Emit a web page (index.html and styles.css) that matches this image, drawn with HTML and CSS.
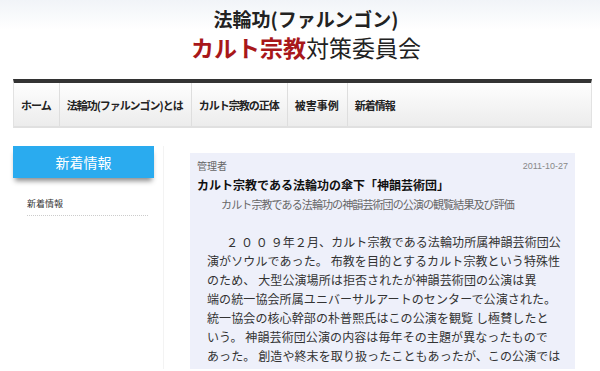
FILE: index.html
```html
<!DOCTYPE html>
<html lang="ja">
<head>
    <meta charset="UTF-8">
    <meta name="viewport" content="width=device-width, initial-scale=1.0">
    <title>カルト宗教対策委員会</title>
    <link rel="stylesheet" href="styles.css">
</head>
<body>
    <div class="header">
        <div class="site-sub">法輪功(ファルンゴン)</div>
        <div class="site-title"><span class="red">カルト宗教</span>対策委員会</div>
    </div>
    <div class="nav">
        <a href="#">ホーム</a>
        <a href="#">法輪功(ファルンゴン)とは</a>
        <a href="#">カルト宗教の正体</a>
        <a href="#">被害事例</a>
        <a href="#">新着情報</a>
    </div>
    <div class="content">
        <div class="sidebar">
            <div class="side-head">新着情報</div>
            <a class="side-link" href="#">新着情報</a>
        </div>
        <div class="main">
            <div class="post">
                <div class="meta">
                    <span class="author">管理者</span>
                    <span class="date">2011-10-27</span>
                </div>
                <div class="post-title">カルト宗教である法輪功の傘下「神韻芸術団」</div>
                <div class="post-sub">カルト宗教である法輪功の神韻芸術団の公演の観覧結果及び評価</div>
                <p class="post-body">
                    <span class="indent">２ ０ ０ ９年２月、カルト宗教である法輪功所属神韻芸術団公</span><br>
                    演がソウルであった。 布教を目的とするカルト宗教という特殊性<br>
                    のため、 大型公演場所は拒否されたが神韻芸術団の公演は異<br>
                    端の統一協会所属ユニバーサルアートのセンターで公演された。<br>
                    統一協会の核心幹部の朴普熙氏はこの公演を観覧 し極賛したと<br>
                    いう。 神韻芸術団公演の内容は毎年その主題が異なったもので<br>
                    あった。 創造や終末を取り扱ったこともあったが、この公演では
                </p>
            </div>
        </div>
    </div>
</body>
</html>
```

FILE: styles.css
```css
body {
    margin: 0;
    font-family: "Noto Sans CJK JP", "Liberation Sans", sans-serif;
    color: #222;
    background: #fff;
    overflow: hidden;
}
a {
    text-decoration: none;
    color: inherit;
}
.header {
    height: 79px;
    box-sizing: border-box;
    padding: 7px 0 0 12px;
    text-align: center;
    background: linear-gradient(#f1f4f8, #fff 30px);
}
.site-sub {
    font-size: 19px;
    font-weight: bold;
    line-height: 24px;
    color: #222;
}
.site-title {
    font-size: 23px;
    line-height: 32px;
    color: #222;
}
.red {
    color: #a8171a;
    font-weight: bold;
}
.nav {
    display: flex;
    margin-left: 13px;
    width: 577px;
    height: 43px;
    border-top: 4px solid #333;
    border-left: 1px solid #e2e2e2;
    border-right: 1px solid #e2e2e2;
    border-bottom: 2px solid #e0e0e0;
    background: linear-gradient(#fefefe, #ececec);
}
.nav a {
    display: flex;
    align-items: center;
    padding: 0 8px 0 7px;
    font-size: 11px;
    font-weight: bold;
    letter-spacing: -1px;
    color: #222;
    border-right: 1px solid #dedede;
}
.nav a:nth-child(4) {
    letter-spacing: 0;
}
.nav a:last-child {
    border-right: none;
}
.content {
    display: flex;
    margin-top: 18px;
}
.sidebar {
    width: 150px;
    margin-left: 13px;
    height: 223px;
    border-right: 1px solid #f3f3f3;
}
.side-head {
    width: 141px;
    height: 32px;
    line-height: 32px;
    text-align: center;
    color: #fff;
    font-size: 14px;
    background: #2aabef;
    box-shadow: 0 5px 5px -2px rgba(0, 0, 0, 0.45);
}
.side-link {
    display: block;
    margin: 19px 0 0 14px;
    width: 121px;
    font-size: 9px;
    line-height: 14px;
    padding-bottom: 4px;
    color: #333;
    border-bottom: 1px dotted #ccc;
}
.main {
    margin-left: 26px;
    padding-top: 7px;
}
.post {
    width: 371px;
    height: 210px;
    overflow: hidden;
    padding: 6px 7px 0 7px;
    background: #eef0fa;
}
.meta {
    display: flex;
    justify-content: space-between;
    font-size: 10px;
    line-height: 14px;
    color: #666;
}
.date {
    font-family: "Liberation Sans", sans-serif;
    color: #888;
    font-size: 9px;
}
.post-title {
    margin-top: 3px;
    font-size: 12px;
    font-weight: bold;
    line-height: 18px;
    color: #111;
}
.post-sub {
    padding-right: 30px;
    text-align: center;
    font-size: 11px;
    letter-spacing: -0.9px;
    line-height: 20px;
    color: #666;
}
.post-body {
    margin: 18px 0 0 10px;
    font-size: 12px;
    line-height: 19px;
    letter-spacing: 0.1px;
    white-space: nowrap;
    color: #333;
}
.indent {
    padding-left: 19px;
}
```
